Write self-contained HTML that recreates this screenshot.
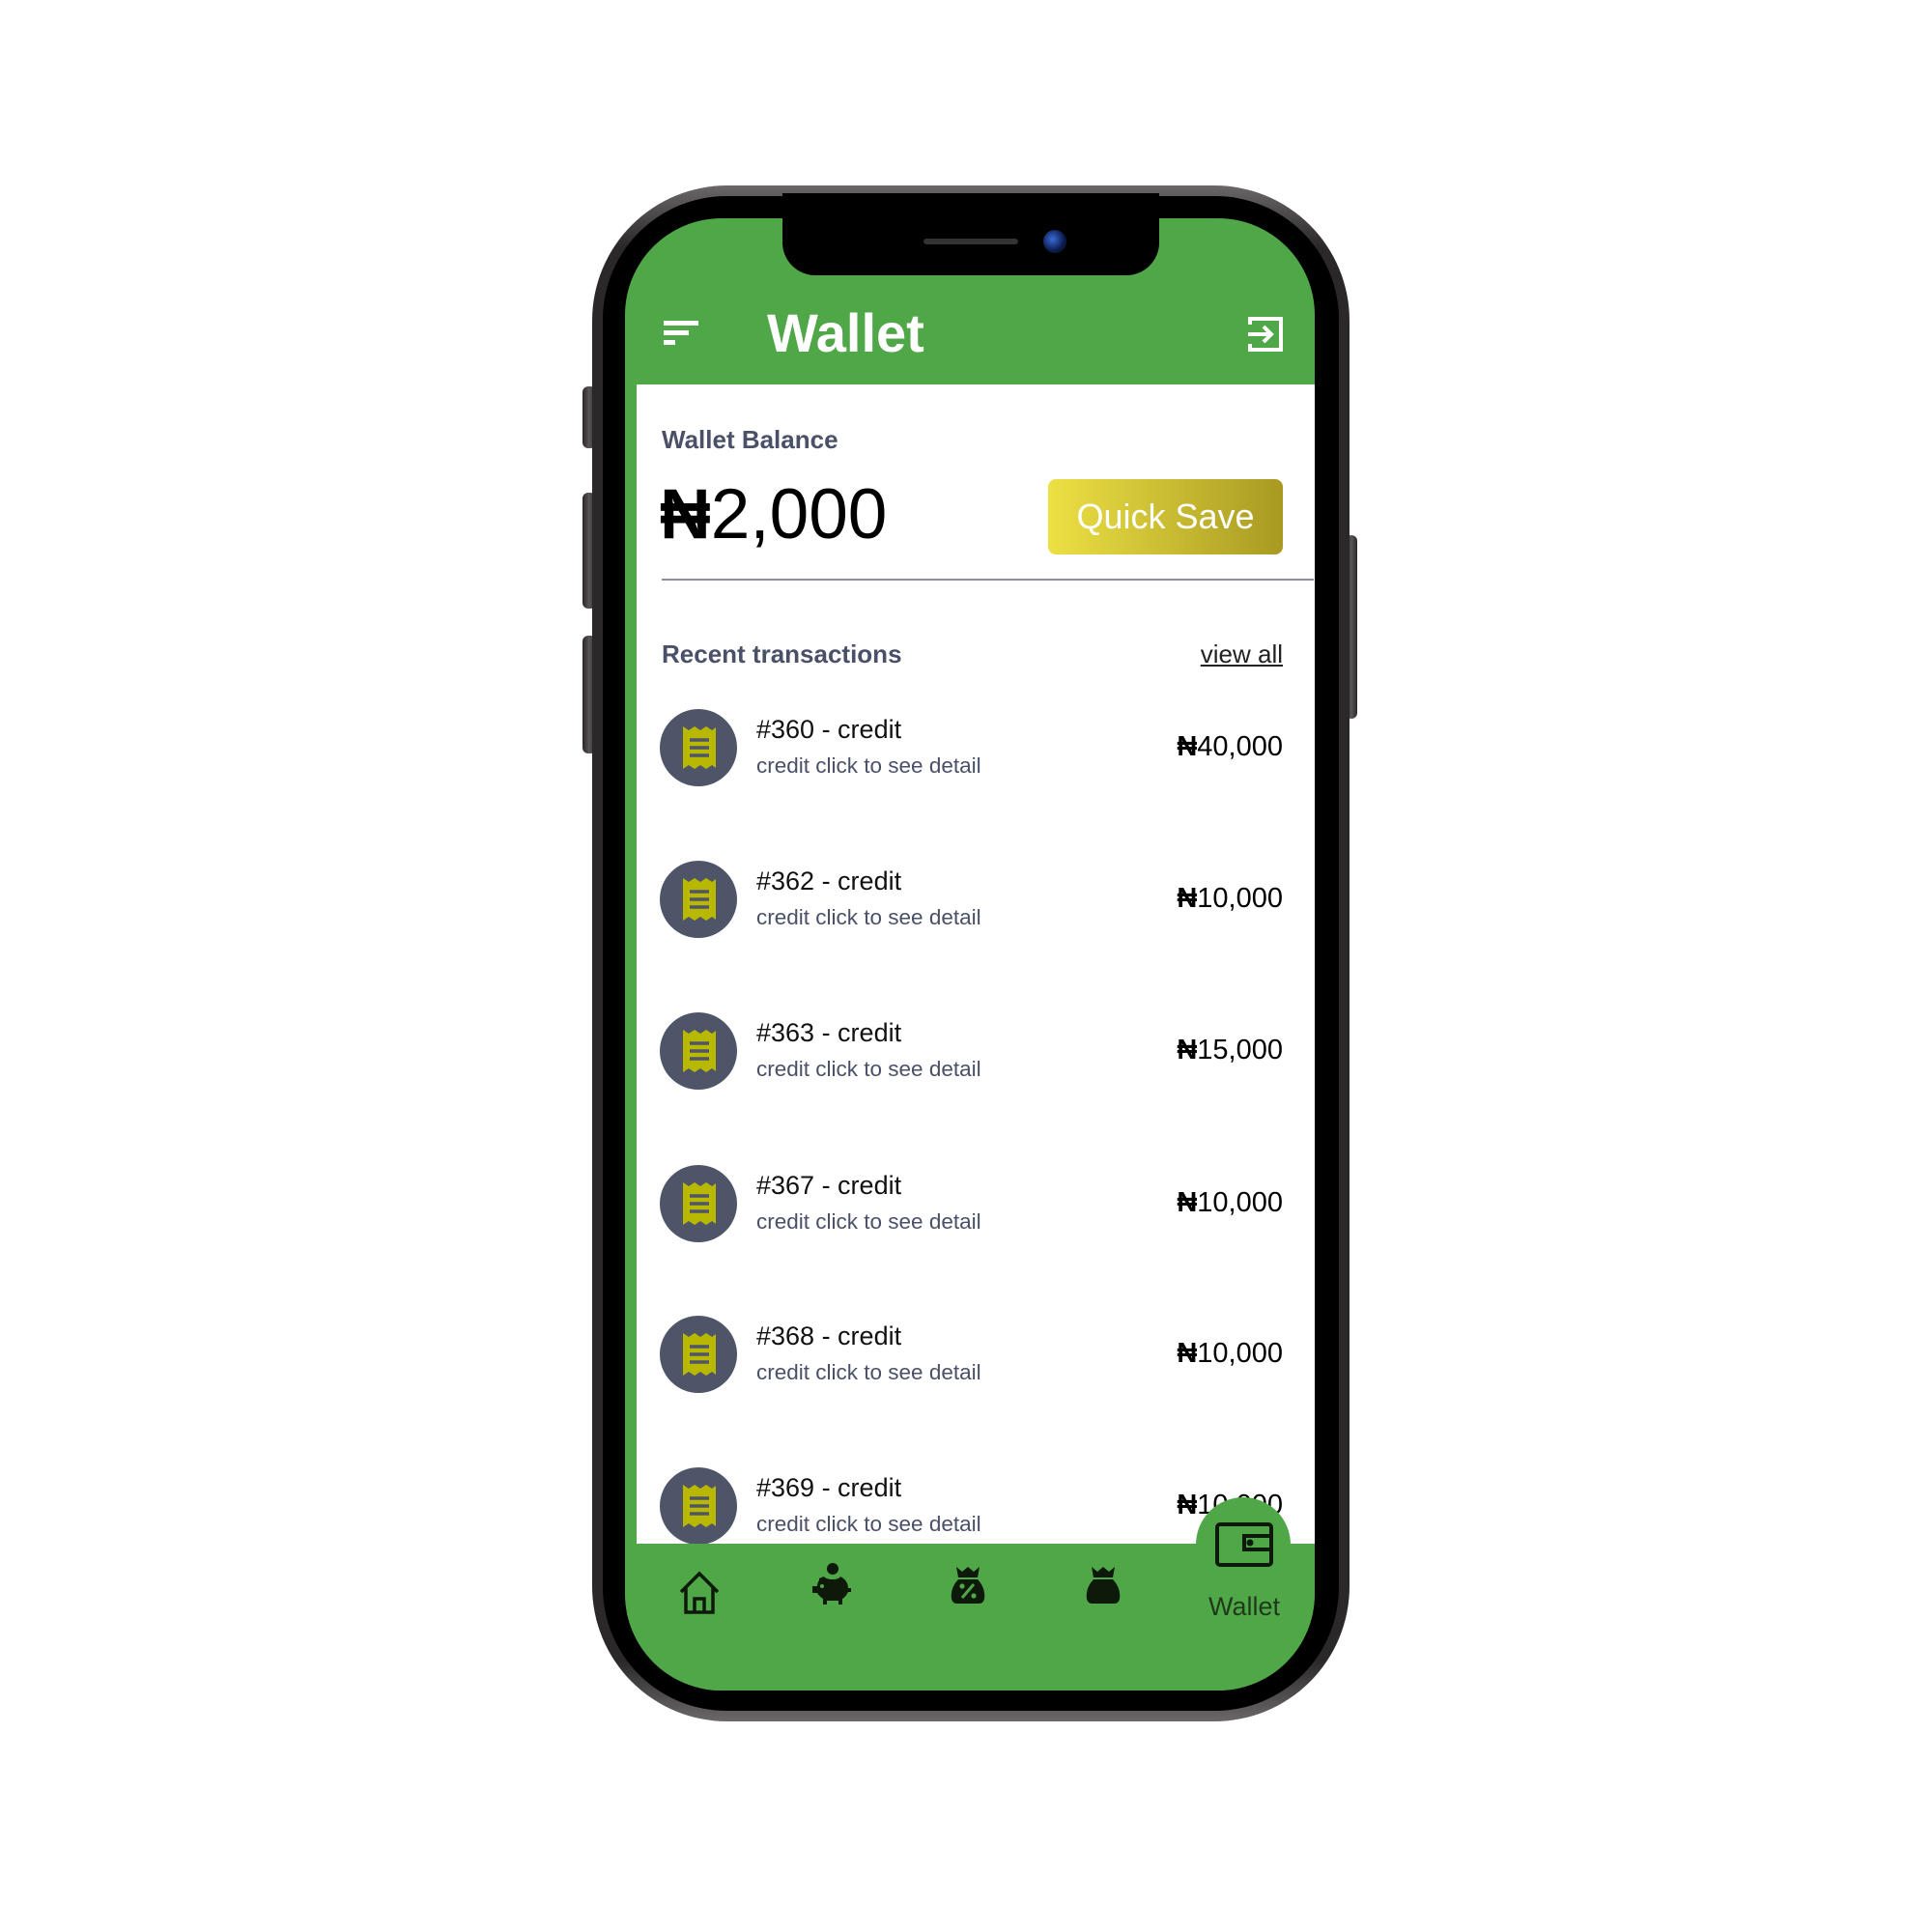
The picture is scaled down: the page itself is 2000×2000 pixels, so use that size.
<!DOCTYPE html>
<html><head><meta charset="utf-8"><style>
*{margin:0;padding:0;box-sizing:border-box}
body{width:2000px;height:2000px;background:#fff;position:relative;overflow:hidden;font-family:"Liberation Sans",sans-serif}
.a{position:absolute}
.btn{background:linear-gradient(90deg,#2a2728,#5a5657 50%,#2a2728);border-radius:6px}
.t{font-size:27px;color:#111}
.s{font-size:22.5px;color:#4a5068}
.amt{font-size:29px;color:#000;text-align:right;width:300px;left:1028px}
</style></head><body>
<div class="a btn" style="left:603px;top:400px;width:14px;height:64px"></div>
<div class="a btn" style="left:603px;top:510px;width:14px;height:120px"></div>
<div class="a btn" style="left:603px;top:658px;width:14px;height:122px"></div>
<div class="a btn" style="left:1393px;top:554px;width:12px;height:190px"></div>
<div class="a" style="left:613px;top:192px;width:784px;height:1590px;border-radius:140px;background:linear-gradient(180deg,#6a6768,#2b2829 4%,#2b2829 96%,#6a6768);"></div>
<div class="a" style="left:624px;top:203px;width:762px;height:1568px;border-radius:128px;background:#000"></div>
<div class="a" style="left:647px;top:226px;width:714px;height:1524px;border-radius:100px;background:#50a748;overflow:hidden">
  <div class="a" style="left:12px;top:172px;width:702px;height:1200px;background:#fff"></div>
</div>
<div class="a" style="left:810px;top:200px;width:390px;height:85px;background:#000;border-radius:0 0 34px 34px"></div>
<div class="a" style="left:956px;top:247px;width:98px;height:6px;background:#333;border-radius:3px"></div>
<div class="a" style="left:1080px;top:238px;width:24px;height:24px;border-radius:50%;background:radial-gradient(circle at 40% 40%,#3a6ad8,#0a1a4a 60%,#111)"></div>
<div class="a" style="left:687px;top:332px;width:36px;height:5px;background:#fff"></div>
<div class="a" style="left:687px;top:342px;width:26px;height:5px;background:#fff"></div>
<div class="a" style="left:687px;top:352px;width:12px;height:5px;background:#fff"></div>
<div class="a" style="left:794px;top:310px;font-size:56px;font-weight:bold;color:#fff;line-height:70px">Wallet</div>
<svg class="a" style="left:1290px;top:326px" width="42" height="40" viewBox="0 0 42 40" fill="none" stroke="#fff" stroke-width="4"><path d="M4 10V4H36V36H4V30"/><path d="M2 20H26M18 12L26 20L18 28"/></svg>
<div class="a" style="left:685px;top:440px;font-size:26px;font-weight:bold;color:#4a5068">Wallet Balance</div>
<div class="a" style="left:683px;top:490px;font-size:73px;color:#000;line-height:86px"><b>₦</b>2,000</div>
<div class="a" style="left:1085px;top:496px;width:243px;height:78px;border-radius:8px;background:linear-gradient(90deg,#ede044,#a89a22);color:#fff;font-size:36px;line-height:78px;text-align:center">Quick Save</div>
<div class="a" style="left:685px;top:599px;width:675px;height:2px;background:#8a8f9a"></div>
<div class="a" style="left:685px;top:662px;font-size:26px;font-weight:bold;color:#4a5068">Recent transactions</div>
<div class="a" style="left:1228px;top:662px;width:100px;text-align:right;font-size:26px;color:#222;text-decoration:underline">view all</div>
<div class="a" style="left:683px;top:734px;width:80px;height:80px;border-radius:50%;background:#4f5568"></div>
<div class="a" style="left:683px;top:891px;width:80px;height:80px;border-radius:50%;background:#4f5568"></div>
<div class="a" style="left:683px;top:1048px;width:80px;height:80px;border-radius:50%;background:#4f5568"></div>
<div class="a" style="left:683px;top:1206px;width:80px;height:80px;border-radius:50%;background:#4f5568"></div>
<div class="a" style="left:683px;top:1362px;width:80px;height:80px;border-radius:50%;background:#4f5568"></div>
<div class="a" style="left:683px;top:1519px;width:80px;height:80px;border-radius:50%;background:#4f5568"></div>
<svg class="a" style="left:703px;top:750px" width="40" height="48" viewBox="0 0 40 48"><path d="M4 2L10 6L16 2L22 6L28 2L34 6L38 3V45L34 42L28 46L22 42L16 46L10 42L4 46Z" fill="#b8b800"/><path d="M11 16H31M11 24H31M11 32H31" stroke="#4f5568" stroke-width="3.5"/></svg>
<svg class="a" style="left:703px;top:907px" width="40" height="48" viewBox="0 0 40 48"><path d="M4 2L10 6L16 2L22 6L28 2L34 6L38 3V45L34 42L28 46L22 42L16 46L10 42L4 46Z" fill="#b8b800"/><path d="M11 16H31M11 24H31M11 32H31" stroke="#4f5568" stroke-width="3.5"/></svg>
<svg class="a" style="left:703px;top:1064px" width="40" height="48" viewBox="0 0 40 48"><path d="M4 2L10 6L16 2L22 6L28 2L34 6L38 3V45L34 42L28 46L22 42L16 46L10 42L4 46Z" fill="#b8b800"/><path d="M11 16H31M11 24H31M11 32H31" stroke="#4f5568" stroke-width="3.5"/></svg>
<svg class="a" style="left:703px;top:1222px" width="40" height="48" viewBox="0 0 40 48"><path d="M4 2L10 6L16 2L22 6L28 2L34 6L38 3V45L34 42L28 46L22 42L16 46L10 42L4 46Z" fill="#b8b800"/><path d="M11 16H31M11 24H31M11 32H31" stroke="#4f5568" stroke-width="3.5"/></svg>
<svg class="a" style="left:703px;top:1378px" width="40" height="48" viewBox="0 0 40 48"><path d="M4 2L10 6L16 2L22 6L28 2L34 6L38 3V45L34 42L28 46L22 42L16 46L10 42L4 46Z" fill="#b8b800"/><path d="M11 16H31M11 24H31M11 32H31" stroke="#4f5568" stroke-width="3.5"/></svg>
<svg class="a" style="left:703px;top:1535px" width="40" height="48" viewBox="0 0 40 48"><path d="M4 2L10 6L16 2L22 6L28 2L34 6L38 3V45L34 42L28 46L22 42L16 46L10 42L4 46Z" fill="#b8b800"/><path d="M11 16H31M11 24H31M11 32H31" stroke="#4f5568" stroke-width="3.5"/></svg>

<div class="a t" style="left:783px;top:740px">#360 - credit</div><div class="a s" style="left:783px;top:780px">credit click to see detail</div><div class="a amt" style="top:757px"><b>₦</b>40,000</div>
<div class="a t" style="left:783px;top:897px">#362 - credit</div><div class="a s" style="left:783px;top:937px">credit click to see detail</div><div class="a amt" style="top:914px"><b>₦</b>10,000</div>
<div class="a t" style="left:783px;top:1054px">#363 - credit</div><div class="a s" style="left:783px;top:1094px">credit click to see detail</div><div class="a amt" style="top:1071px"><b>₦</b>15,000</div>
<div class="a t" style="left:783px;top:1212px">#367 - credit</div><div class="a s" style="left:783px;top:1252px">credit click to see detail</div><div class="a amt" style="top:1229px"><b>₦</b>10,000</div>
<div class="a t" style="left:783px;top:1368px">#368 - credit</div><div class="a s" style="left:783px;top:1408px">credit click to see detail</div><div class="a amt" style="top:1385px"><b>₦</b>10,000</div>
<div class="a t" style="left:783px;top:1525px">#369 - credit</div><div class="a s" style="left:783px;top:1565px">credit click to see detail</div><div class="a amt" style="top:1542px"><b>₦</b>10,000</div>

<div class="a" style="left:647px;top:226px;width:714px;height:1524px;border-radius:100px;overflow:hidden;pointer-events:none">
  <div class="a" style="left:0;top:1372px;width:714px;height:160px;background:#50a748"></div>
</div>
<div class="a" style="left:1238px;top:1550px;width:98px;height:98px;border-radius:50%;background:#50a748"></div>
<svg class="a" style="left:1258px;top:1576px" width="60" height="46" viewBox="0 0 60 46" fill="none" stroke="#0d1a0a" stroke-width="4"><rect x="2" y="2" width="56" height="42" rx="3"/><path d="M58 14H30V28H58"/><circle cx="36" cy="21" r="1.5" fill="#0d1a0a"/></svg>
<div class="a" style="left:1238px;top:1648px;width:100px;text-align:center;font-size:27px;color:#1f3a1a">Wallet</div>
<svg class="a" style="left:703px;top:1626px" width="42" height="46" viewBox="0 0 42 46" fill="none" stroke="#0d1a0a" stroke-width="3.5"><path d="M2 22L21 3L40 22"/><path d="M7 18V43H35V18"/><path d="M16 43V29H26V43"/></svg>
<svg class="a" style="left:840px;top:1618px" width="42" height="44" viewBox="0 0 42 44" fill="#0d1a0a"><circle cx="22" cy="6" r="6"/><path d="M8 16L13 14C16 18 28 18 30 14C36 17 38 22 38 26H41V30H38C36 34 34 36 32 37V43H28V39H16V43H12V37C9 35 7 33 6 31H1V24H6C6 22 7 19 8 18Z"/><circle cx="11" cy="24" r="2" fill="#50a748"/></svg>
<svg class="a" style="left:984px;top:1621px" width="36" height="40" viewBox="0 0 36 40" fill="#0d1a0a"><path d="M6 1L12 6L18 1L24 6L30 1L28 12H8Z"/><path d="M8 14H28C34 20 36 28 35 34C34 38 32 39 29 39H7C4 39 2 38 1 34C0 28 2 20 8 14Z"/><path d="M12 33L24 19" stroke="#50a748" stroke-width="3"/><circle cx="12" cy="21" r="2.6" fill="#50a748"/><circle cx="24" cy="31" r="2.6" fill="#50a748"/></svg>
<svg class="a" style="left:1124px;top:1621px" width="36" height="40" viewBox="0 0 36 40" fill="#0d1a0a"><path d="M6 1L12 6L18 1L24 6L30 1L28 12H8Z"/><path d="M8 14H28C34 20 36 28 35 34C34 38 32 39 29 39H7C4 39 2 38 1 34C0 28 2 20 8 14Z"/></svg>
</body></html>
